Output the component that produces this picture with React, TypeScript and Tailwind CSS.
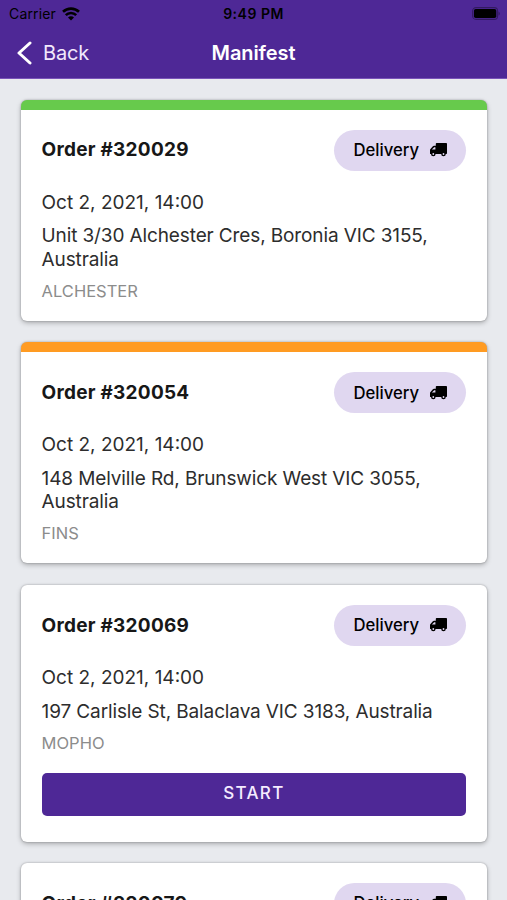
type Order = {
  id: string;
  date?: string;
  address?: string;
  customer?: string;
  accent?: string;
  canStart?: boolean;
};

const orders: Order[] = [
  {
    id: "320029",
    date: "Oct 2, 2021, 14:00",
    address: "Unit 3/30 Alchester Cres, Boronia VIC 3155, Australia",
    customer: "ALCHESTER",
    accent: "border-t-10 border-[#67ca4c]",
  },
  {
    id: "320054",
    date: "Oct 2, 2021, 14:00",
    address: "148 Melville Rd, Brunswick West VIC 3055, Australia",
    customer: "FINS",
    accent: "border-t-10 border-[#ff9b22]",
  },
  {
    id: "320069",
    date: "Oct 2, 2021, 14:00",
    address: "197 Carlisle St, Balaclava VIC 3183, Australia",
    customer: "MOPHO",
    canStart: true,
  },
  { id: "320079" },
];

function WifiIcon() {
  return (
    <svg className="w-[18px] h-[14px]" viewBox="0 0 18 14" fill="none" stroke="#000" strokeWidth="2.6">
      <path d="M1 4.8a11.6 11.6 0 0 1 16 0" />
      <path d="M3.8 8.2a7.4 7.4 0 0 1 10.4 0" />
      <path d="M9 13.4 6 10.4a4.2 4.2 0 0 1 6 0Z" fill="#000" stroke="none" />
    </svg>
  );
}

function BatteryIcon() {
  return (
    <svg className="w-[28px] h-[13px]" viewBox="0 0 28 13">
      <rect x="0.6" y="0.6" width="25" height="11.8" rx="3.4" fill="none" stroke="#000" strokeOpacity="0.35" strokeWidth="1.1" />
      <rect x="1.9" y="2" width="22.4" height="9" rx="1.8" fill="#000" />
      <path d="M26.6 4.4c1.5.8 1.5 3.4 0 4.2Z" fill="#000" fillOpacity="0.4" />
    </svg>
  );
}

function TruckIcon() {
  return (
    <svg className="w-[17px] h-[14px]" viewBox="0 0 17 14">
      <path
        fill="#000"
        fillRule="evenodd"
        d="M6.6 0h9.6c.5 0 .8.3.8.8v9.4c0 .4-.3.7-.7.7h-.5a2.3 2.3 0 1 1-4.6 0H5.6a2.3 2.3 0 1 1-4.6 0H.5a.5.5 0 0 1-.5-.5V7.2c0-.5.1-.9.5-1.3l2.4-2.6c.3-.3.6-.5 1.1-.5h1.8V.8c0-.5.3-.8.8-.8ZM5.4 4.2H4.2L1.9 6.6h3.5ZM3.3 10.1a.9.9 0 1 0 0 1.8.9.9 0 0 0 0-1.8Zm10.2 0a.9.9 0 1 0 0 1.8.9.9 0 0 0 0-1.8Z"
      />
    </svg>
  );
}

function Header() {
  return (
    <header className="h-[79px] shrink-0 bg-[#4e2896] border-b border-[#7954b8]">
      <div className="h-[27px] px-[9px] grid grid-cols-3 items-center text-black">
        <div className="flex items-center gap-[6px] text-[14px] tracking-[0.15px]">
          <span>Carrier</span>
          <WifiIcon />
        </div>
        <div className="text-center text-[14px] font-semibold tracking-[0.5px] whitespace-nowrap">9:49 PM</div>
        <div className="-mr-[1.5px] flex justify-end">
          <BatteryIcon />
        </div>
      </div>
      <div className="h-[51px] px-[16px] grid grid-cols-3 items-center text-white">
        <button className="flex items-center gap-[11px] text-[20px] tracking-[-0.2px] text-[#f1e8fc]">
          <svg className="w-4 h-6" viewBox="0 0 16 24" fill="none" stroke="#fff" strokeWidth="3" strokeLinecap="round" strokeLinejoin="round">
            <path d="M14 2 3 12l11 10" />
          </svg>
          Back
        </button>
        <h1 className="text-center text-[20px] font-semibold tracking-[-0.1px]">Manifest</h1>
      </div>
    </header>
  );
}

function OrderCard({ order }: { order: Order }) {
  return (
    <div
      className={`rounded-[6px] bg-white px-[20.2px] pt-[20px] shadow-[0_2px_5px_rgba(0,0,0,0.26),0_0_2px_rgba(0,0,0,0.3)] ${
        order.canStart ? "pb-[26px]" : "pb-[20px]"
      } ${order.accent ?? ""}`}
    >
      <div className="flex items-center justify-between">
        <h2 className="pt-px text-[19px] font-bold tracking-[0.25px] text-[#171717]">Order #{order.id}</h2>
        <div className="w-[132px] h-[41px] rounded-full bg-[#e0d7f0] flex items-center justify-center gap-[11px] text-[16.7px] font-medium text-black">
          <span className="pt-px">Delivery</span>
          <TruckIcon />
        </div>
      </div>
      {order.address && (
        <div className="mt-[20px] text-[19px] leading-[23.4px] text-[#2d2d2d]">
          <p>{order.date}</p>
          <p className="mt-[10.4px] tracking-[-0.12px]">{order.address}</p>
        </div>
      )}
      {order.customer && (
        <p className="mt-[9.6px] text-[16.5px] leading-[20px] text-[#8c8c8c]">{order.customer}</p>
      )}
      {order.canStart && (
        <button className="mt-[20px] w-full h-[43px] rounded-[5px] bg-[#4e2896] text-[17px] font-medium tracking-[1.3px] text-[#f5ecff]">
          START
        </button>
      )}
    </div>
  );
}

export default function App() {
  return (
    <div className="h-[900px] overflow-hidden flex flex-col bg-[#e8eaee] font-['Inter','Liberation_Sans',sans-serif]">
      <Header />
      <main className="flex-1 min-h-0 overflow-hidden pt-[20.6px] pl-[21.4px] pr-[20.5px] flex flex-col gap-[21.4px]">
        {orders.map((order) => (
          <OrderCard key={order.id} order={order} />
        ))}
      </main>
    </div>
  );
}
